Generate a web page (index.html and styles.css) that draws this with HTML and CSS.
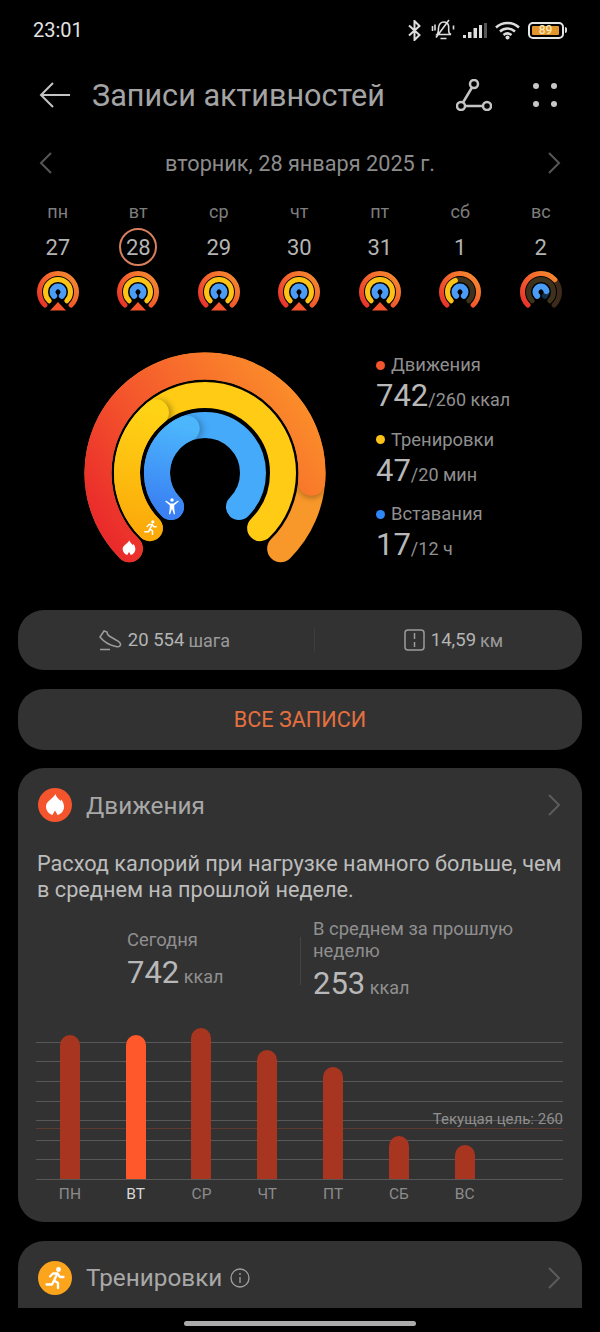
FILE: index.html
```html
<!DOCTYPE html>
<html lang="ru">
<head>
  <meta charset="UTF-8">
  <meta name="viewport" content="width=device-width, initial-scale=1.0">
  <title>Записи активностей</title>
  <link rel="stylesheet" href="styles.css">
</head>
<body>
  <svg class="sprite" aria-hidden="true">
    <symbol id="flame" viewBox="0 0 24 24">
      <path fill="#fff" d="M12.500 1c.5 3 3 4.500 5 7 .5-.7.8-1.500.8-1.500 1.500 2 2.700 4.500 2.700 7 0 4-2.500 7.500-6.500 8.500-.8-1.500-1.500-3-2.500-4.500-1 1.500-1.700 3-2.500 4.500C6 21 3 17.500 3 13.500 3 8 10.500 5.500 12.500 1z"/>
    </symbol>
    <symbol id="runner" viewBox="0 0 24 24">
      <circle cx="15.500" cy="3.500" r="2.400" fill="#fff"/>
      <path fill="none" stroke="#fff" stroke-width="2.300" stroke-linecap="round" stroke-linejoin="round" d="M7 10.500 10 7.500h4.500L11 14.500l4 2.500v5M14.500 7.500l2.500 3.500h3.500M11 14.500 9 18.500H3.500"/>
    </symbol>
    <symbol id="person" viewBox="0 0 24 24">
      <circle cx="12" cy="4" r="2.300" fill="#fff"/>
      <path fill="#fff" d="M3 6 4 4.800 9.800 8.500h4.400L20 4.800 21 6l-6 5v4l1 8h-1.500L12 15.500 9.500 23H8l1-8v-4z"/>
    </symbol>
    <symbol id="minibase" viewBox="0 0 42 42">
      <path class="mini-outer" d="M7.900 34.100A18.500 18.500 0 1 1 34.100 34.100"/>
    </symbol>
    <linearGradient id="outerGrad" gradientUnits="userSpaceOnUse" x1="20" y1="210" x2="225" y2="60">
      <stop offset="0" stop-color="#e8232b"/>
      <stop offset=".45" stop-color="#f4552c"/>
      <stop offset="1" stop-color="#fb8c2a"/>
    </linearGradient>
    <linearGradient id="midGrad" gradientUnits="userSpaceOnUse" x1="60" y1="180" x2="80" y2="60">
      <stop offset="0" stop-color="#fbaa0a"/>
      <stop offset="1" stop-color="#ffd315"/>
    </linearGradient>
    <linearGradient id="innerGrad" gradientUnits="userSpaceOnUse" x1="85" y1="160" x2="105" y2="75">
      <stop offset="0" stop-color="#3a80f3"/>
      <stop offset="1" stop-color="#4cb6fc"/>
    </linearGradient>
    <linearGradient id="miniGrad" x1="0" y1="1" x2="1" y2="0">
      <stop offset="0" stop-color="#e8302a"/>
      <stop offset=".5" stop-color="#f4602c"/>
      <stop offset="1" stop-color="#f59030"/>
    </linearGradient>
  </svg>

  <div class="screen">
    <div class="status">
      <span class="time">23:01</span>
      <div class="status-icons">
        <svg class="st-bt" width="13" height="21" viewBox="0 0 13 21"><path d="M1 5.500 11.500 15 6.500 20V1l5 5L1 15.500"/></svg>
        <svg class="st-bell" width="24" height="22" viewBox="0 0 24 22"><path d="M6 15.500c1.500-1.500 1.500-3.500 1.500-6.500 0-3.500 2.500-6 5-6s4.500 1.500 5 3.500c.5 2-.2 5 .5 7 .3 1 1 1.500 2 2zM7 15.500h12M9.500 19.500h6M18 1 5 18.500M1.500 7v5M4 5.500v6M22.500 6.500v4"/></svg>
        <svg width="24" height="15" viewBox="0 0 24 15"><rect x="0" y="12" width="3" height="3" fill="#ddd"/><rect x="5" y="9" width="3.500" height="6" fill="#ddd"/><rect x="10.500" y="5" width="3.500" height="10" fill="#ddd"/><rect x="16" y="2" width="3" height="13" fill="#ddd"/><rect x="21" y="0" width="3" height="15" fill="#555"/></svg>
        <svg class="st-wifi" width="25" height="19" viewBox="0 0 25 19"><path d="M1 6.500C7.500.5 17.500.5 24 6.500"/><path d="M5 10.500c4.500-4 10.500-4 15 0"/><path d="M8.500 14c2.500-2 5.500-2 8 0"/><circle cx="12.500" cy="16.500" r="2" fill="#ddd" stroke="none"/></svg>
        <div class="battery">
          <div class="battery-body"><span class="battery-fill">89</span></div>
          <span class="battery-tip"></span>
        </div>
      </div>
    </div>

    <div class="appbar">
      <svg class="back" width="32" height="28" viewBox="0 0 32 28"><path d="M31 14H2M14 2 2 14l12 12"/></svg>
      <h1 class="title">Записи активностей</h1>
      <svg class="route" width="36" height="32" viewBox="0 0 36 32"><circle cx="18" cy="5" r="4"/><circle cx="5" cy="27" r="4"/><circle cx="31" cy="27" r="4"/><path d="M16 8.500 7 23.500M9 27h18"/></svg>
      <div class="dots"><i></i><i></i><i></i><i></i></div>
    </div>

    <div class="dateline">
      <svg class="chev" width="13" height="22" viewBox="0 0 13 22"><path d="M12 1 2 11l10 10"/></svg>
      <span>вторник, 28 января 2025 г.</span>
      <svg class="chev" width="13" height="22" viewBox="0 0 13 22"><path d="M1 1l10 10L1 21"/></svg>
    </div>

    <div class="week">
      <div class="day"><span class="dow">пн</span><span class="num">27</span>
        <svg class="mini" viewBox="0 0 42 42"><use href="#minibase"/><path class="mini-mid" d="M12.200 29.800A12.500 12.500 0 1 1 29.800 29.800"/><path class="mini-in" d="M17.100 24.900A5.500 5.500 0 1 1 24.900 24.900"/><path class="mini-tri" d="M21 31 29 39.500H13z"/></svg>
      </div>
      <div class="day"><span class="dow">вт</span><span class="num today">28</span>
        <svg class="mini" viewBox="0 0 42 42"><use href="#minibase"/><path class="mini-mid" d="M12.200 29.800A12.500 12.500 0 1 1 29.800 29.800"/><path class="mini-in" d="M17.100 24.900A5.500 5.500 0 1 1 24.900 24.900"/><path class="mini-tri" d="M21 31 29 39.500H13z"/></svg>
      </div>
      <div class="day"><span class="dow">ср</span><span class="num">29</span>
        <svg class="mini" viewBox="0 0 42 42"><use href="#minibase"/><path class="mini-mid" d="M12.200 29.800A12.500 12.500 0 1 1 29.800 29.800"/><path class="mini-in" d="M17.100 24.900A5.500 5.500 0 1 1 24.900 24.900"/><path class="mini-tri" d="M21 31 29 39.500H13z"/></svg>
      </div>
      <div class="day"><span class="dow">чт</span><span class="num">30</span>
        <svg class="mini" viewBox="0 0 42 42"><use href="#minibase"/><path class="mini-mid" d="M12.200 29.800A12.500 12.500 0 1 1 29.800 29.800"/><path class="mini-in" d="M17.100 24.900A5.500 5.500 0 1 1 24.900 24.900"/><path class="mini-tri" d="M21 31 29 39.500H13z"/></svg>
      </div>
      <div class="day"><span class="dow">пт</span><span class="num">31</span>
        <svg class="mini" viewBox="0 0 42 42"><use href="#minibase"/><path class="mini-mid" d="M12.200 29.800A12.500 12.500 0 1 1 29.800 29.800"/><path class="mini-in" d="M17.100 24.900A5.500 5.500 0 1 1 24.900 24.900"/><path class="mini-tri" d="M21 31 29 39.500H13z"/></svg>
      </div>
      <div class="day"><span class="dow">сб</span><span class="num">1</span>
        <svg class="mini" viewBox="0 0 42 42"><use href="#minibase"/><path class="mini-mid dim" d="M12.200 29.800A12.500 12.500 0 1 1 29.800 29.800"/><path class="mini-mid" pathLength="100" stroke-dasharray="42 100" d="M12.200 29.800A12.500 12.500 0 1 1 29.800 29.800"/><path class="mini-in" d="M17.100 24.900A5.500 5.500 0 1 1 24.900 24.900"/></svg>
      </div>
      <div class="day"><span class="dow">вс</span><span class="num">2</span>
        <svg class="mini" viewBox="0 0 42 42"><path class="mini-outer dim" d="M7.900 34.100A18.500 18.500 0 1 1 34.100 34.100"/><path class="mini-outer" pathLength="100" stroke-dasharray="68 100" d="M7.900 34.100A18.500 18.500 0 1 1 34.100 34.100"/><path class="mini-mid dim" d="M12.200 29.800A12.500 12.500 0 1 1 29.800 29.800"/><path class="mini-in dim-blue" d="M17.100 24.900A5.500 5.500 0 1 1 24.900 24.900"/><path class="mini-in" pathLength="100" stroke-dasharray="80 100" d="M17.100 24.900A5.500 5.500 0 1 1 24.900 24.900"/></svg>
      </div>
    </div>

    <div class="summary">
      <svg class="rings" width="242" height="216" viewBox="0 0 242 216">
        <path class="ring r-outer" stroke="#f9982a" d="M45.340 196.660A107 107 0 1 1 196.660 196.660"/>
        <path class="ring r-outer lap lap-outer" stroke="url(#outerGrad)" d="M45.340 196.660A107 107 0 1 1 227.600 130.300"/>
        <path class="ring r-mid" stroke="#ffcb14" d="M65.850 176.150A78 78 0 1 1 176.150 176.150"/>
        <path class="ring r-mid lap lap-mid" stroke="url(#midGrad)" d="M65.850 176.150A78 78 0 0 1 72 60.300"/>
        <path class="ring r-in" stroke="#45aafa" d="M87.060 154.940A48 48 0 1 1 154.940 154.940"/>
        <path class="ring r-in lap lap-in" stroke="url(#innerGrad)" d="M87.060 154.940A48 48 0 0 1 102.700 76.600"/>
        <use href="#flame" x="36.500" y="187.500" width="17" height="17"/>
        <use href="#runner" x="58.500" y="167.500" width="16" height="16"/>
        <use href="#person" x="79" y="145" width="18" height="18"/>
      </svg>
      <div class="stats">
        <div class="stat">
          <div class="stat-label"><i class="dot red"></i>Движения</div>
          <div class="stat-value"><b>742</b>/260 ккал</div>
        </div>
        <div class="stat">
          <div class="stat-label"><i class="dot yellow"></i>Тренировки</div>
          <div class="stat-value"><b>47</b>/20 мин</div>
        </div>
        <div class="stat">
          <div class="stat-label"><i class="dot blue"></i>Вставания</div>
          <div class="stat-value"><b>17</b>/12 ч</div>
        </div>
      </div>
    </div>

    <div class="pill totals">
      <div class="total steps">
        <svg class="line-icon" width="23" height="22" viewBox="0 0 23 22"><path d="M1 8 5 2l3 1c0 2 1 3.500 3 4.500l6 3.500c3 1.500 5 3 4.500 5-.5 1.500-2.500 2-4.500 1.500C12 16.500 5 13 1 8zM1 20.500h10"/></svg>
        <span class="big">20 554</span><span>шага</span>
      </div>
      <div class="total dist">
        <svg class="line-icon" width="21" height="22" viewBox="0 0 21 22"><rect x="1" y="1" width="19" height="20" rx="3"/><path d="M10.500 4v6M10.500 13v5"/></svg>
        <span class="big">14,59</span><span>км</span>
      </div>
    </div>

    <div class="pill all-records">ВСЕ ЗАПИСИ</div>

    <div class="card">
      <div class="card-head">
        <span class="badge badge-red"><svg width="24" height="24"><use href="#flame"/></svg></span>
        <h2>Движения</h2>
        <svg class="chev card-chev" width="13" height="22" viewBox="0 0 13 22"><path d="M1 1l10 10L1 21"/></svg>
      </div>
      <p class="desc">Расход калорий при нагрузке намного больше, чем в среднем на прошлой неделе.</p>
      <div class="compare">
        <div class="cmp cmp-today">
          <div class="cmp-label">Сегодня</div>
          <div class="cmp-value"><b>742</b> ккал</div>
        </div>
        <div class="cmp-line"></div>
        <div class="cmp">
          <div class="cmp-label">В среднем за прошлую неделю</div>
          <div class="cmp-value"><b>253</b> ккал</div>
        </div>
      </div>
      <div class="chart">
        <div class="plot">
          <div class="goal-line"></div>
          <div class="goal-label">Текущая цель: 260</div>
          <div class="col"><div class="bar" style="height:144px"></div></div>
          <div class="col"><div class="bar active" style="height:144px"></div></div>
          <div class="col"><div class="bar" style="height:151px"></div></div>
          <div class="col"><div class="bar" style="height:129px"></div></div>
          <div class="col"><div class="bar" style="height:112px"></div></div>
          <div class="col"><div class="bar" style="height:43px"></div></div>
          <div class="col"><div class="bar" style="height:34px"></div></div>
        </div>
        <div class="axis">
          <span>ПН</span><span class="active">ВТ</span><span>СР</span><span>ЧТ</span><span>ПТ</span><span>СБ</span><span>ВС</span>
        </div>
      </div>
    </div>

    <div class="card card-cut">
      <div class="card-head">
        <span class="badge badge-yellow"><svg width="24" height="24"><use href="#runner"/></svg></span>
        <h2>Тренировки</h2>
        <svg class="info" width="20" height="20" viewBox="0 0 20 20"><circle cx="10" cy="10" r="9"/><path d="M10 9v6M10 5v2"/></svg>
        <svg class="chev card-chev" width="13" height="22" viewBox="0 0 13 22"><path d="M1 1l10 10L1 21"/></svg>
      </div>
    </div>

    <div class="home"><span></span></div>
  </div>
</body>
</html>
```

FILE: styles.css
```css
* {
  box-sizing: border-box;
}
body {
  margin: 0;
  padding: 0;
  background-color: #000;
  color: #a8a8a8;
  font-family: Roboto, "Liberation Sans", sans-serif;
}
.sprite {
  display: block;
  width: 0;
  height: 0;
}
.screen {
  width: 600px;
  height: 1332px;
  overflow: hidden;
  background: #000;
}

/* status bar */
.status {
  height: 60px;
  padding: 0 33px;
  display: flex;
  align-items: center;
  justify-content: space-between;
}
.time {
  font-size: 20px;
  color: #e2e2e2;
}
.status-icons {
  display: flex;
  align-items: center;
  gap: 8px;
}
.status-icons svg {
  fill: none;
  stroke: #ddd;
  stroke-width: 2;
}
.status-icons svg rect {
  stroke: none;
}
.st-bt {
  margin-right: 2px;
}
.status-icons .st-bell {
  stroke-width: 1.600;
}
.status-icons .st-wifi {
  stroke-width: 2.500;
}
.battery {
  display: flex;
  align-items: center;
  gap: 1px;
}
.battery-body {
  width: 36px;
  height: 17px;
  border: 2px solid #e6e6e6;
  border-radius: 5px;
  padding: 2px;
  display: flex;
}
.battery-fill {
  width: 27px;
  background: #e3952b;
  border-radius: 1px;
  color: #f7e5b5;
  font-size: 12px;
  font-weight: 500;
  line-height: 9px;
  text-align: center;
}
.battery-tip {
  width: 2px;
  height: 6px;
  background: #ddd;
  border-radius: 0 2px 2px 0;
}

/* app bar */
.appbar {
  height: 70px;
  padding-left: 39px;
  display: flex;
  align-items: center;
}
.back, .route {
  fill: none;
  stroke: #c4c4c4;
  stroke-width: 2.500;
}
.back {
  stroke-width: 2;
}
.title {
  margin: 0 0 0 21px;
  flex: 1;
  font-size: 30.600px;
  font-weight: 400;
  color: #a4a4a4;
}
.route {
  margin-right: 41px;
}
.dots {
  width: 24px;
  margin-right: 43px;
  display: grid;
  grid-template-columns: 6px 6px;
  justify-content: space-between;
  row-gap: 12px;
}
.dots i {
  width: 6px;
  height: 6px;
  border-radius: 50%;
  background: #c8c8c8;
}

/* date + week */
.dateline {
  height: 66px;
  padding: 0 39px;
  display: flex;
  align-items: center;
  justify-content: space-between;
  font-size: 21.700px;
  color: #8c8c8c;
}
.chev {
  fill: none;
  stroke: #565656;
  stroke-width: 2;
}
.week {
  padding-left: 17.500px;
  display: grid;
  grid-template-columns: repeat(7, 80.500px);
}
.day {
  display: flex;
  flex-direction: column;
  align-items: center;
}
.dow {
  height: 32px;
  line-height: 32px;
  font-size: 18px;
  color: #7e7e7e;
}
.num {
  width: 38px;
  height: 38px;
  border-radius: 50%;
  line-height: 40px;
  text-align: center;
  font-size: 22px;
  color: #b4b4b4;
}
.num.today {
  border: 2px solid #d97f5e;
  line-height: 36px;
}
.mini {
  width: 42px;
  height: 42px;
  margin-top: 5px;
  fill: none;
}
.mini-outer, .mini-mid, .mini-in {
  fill: none;
  stroke-linecap: round;
}
.mini-outer {
  stroke: url(#miniGrad);
  stroke-width: 5;
}
.mini-mid {
  stroke: #fcc215;
  stroke-width: 5;
}
.mini-in {
  stroke: #4a9cf6;
  stroke-width: 6;
}
.mini-outer.dim {
  stroke: #3d2a1a;
}
.mini-mid.dim {
  stroke: #3e321c;
}
.mini-in.dim-blue {
  stroke: #12304a;
}
.mini-tri {
  fill: #f4552c;
}

/* big rings and numbers */
.summary {
  height: 297px;
  padding: 39px 0 0 84px;
  display: flex;
  align-items: flex-start;
}
.rings {
  flex: none;
}
.ring {
  fill: none;
  stroke-linecap: round;
}
.r-outer {
  stroke-width: 27;
}
.r-mid, .r-in {
  stroke-width: 26;
}
.lap-outer {
  filter: drop-shadow(0 2px 3px rgba(0, 0, 0, .3));
}
.lap-mid {
  filter: drop-shadow(3px 1px 3px rgba(0, 0, 0, .3));
}
.lap-in {
  filter: drop-shadow(3px 1px 3px rgba(0, 0, 0, .25));
}
.stats {
  margin-left: 50px;
}
.stat {
  height: 74.500px;
}
.stat-label {
  height: 26px;
  line-height: 26px;
  font-size: 18.400px;
  color: #8f8f8f;
  display: flex;
  align-items: center;
  gap: 6px;
}
.dot {
  width: 9px;
  height: 9px;
  border-radius: 50%;
}
.dot.red {
  background: #f4552c;
}
.dot.yellow {
  background: #fcc215;
}
.dot.blue {
  background: #2f86f6;
}
.stat-value {
  height: 36px;
  line-height: 36px;
  font-size: 18px;
  color: #8f8f8f;
}
.stat-value b {
  font-size: 31px;
  font-weight: 400;
  color: #b8b8b8;
}

/* pills */
.pill {
  height: 60px;
  margin: 0 18px 19px;
  background: #323232;
  border-radius: 26px;
}
.totals {
  display: flex;
  align-items: center;
}
.total {
  display: flex;
  align-items: center;
  justify-content: center;
  gap: 4px;
  height: 24px;
  font-size: 18px;
  color: #9a9a9a;
}
.steps {
  width: 297px;
  padding-right: 3px;
  border-right: 1px solid #3e3e3e;
}
.dist {
  flex: 1;
  padding-left: 10px;
}
.total .big {
  font-size: 18.500px;
  color: #b4b4b4;
}
.line-icon {
  fill: none;
  stroke: #9c9c9c;
  stroke-width: 1.500;
  margin-right: 2px;
}
.all-records {
  height: 61px;
  margin-bottom: 18px;
  line-height: 61px;
  text-align: center;
  font-size: 21.600px;
  color: #e5703f;
}

/* cards */
.card {
  margin: 0 18px 19px;
  height: 454px;
  background: #323232;
  border-radius: 26px;
}
.card-cut {
  height: 67px;
  margin-bottom: 0;
  border-radius: 26px 26px 0 0;
}
.card-head {
  height: 74px;
  padding: 0 21px 0 20px;
  display: flex;
  align-items: center;
}
.card-cut .card-head {
  height: 73px;
}
.card-head h2 {
  margin: 0 0 0 14px;
  font-size: 24.300px;
  font-weight: 400;
  color: #a8a8a8;
}
.card-chev {
  margin-left: auto;
  stroke: #5c5c5c;
}
.badge {
  width: 34px;
  height: 34px;
  border-radius: 50%;
  display: flex;
  align-items: center;
  justify-content: center;
}
.badge-red {
  background: #f4552c;
}
.badge-yellow {
  background: #fca51c;
}
.info {
  margin-left: 8px;
  fill: none;
  stroke: #a0a0a0;
  stroke-width: 1.300;
}
.desc {
  margin: 9px 18px 0 19px;
  font-size: 21.700px;
  line-height: 26px;
  color: #bcbcbc;
}
.compare {
  height: 84px;
  margin-top: 15px;
  padding-left: 109px;
  display: flex;
  align-items: flex-start;
}
.cmp {
  width: 205px;
}
.cmp-today {
  width: 173px;
  padding-top: 11px;
}
.cmp-line {
  width: 1px;
  height: 48px;
  margin: 19px 12px 0 0;
  background: #444;
}
.cmp-label {
  font-size: 18.400px;
  line-height: 22px;
  color: #8f8f8f;
}
.cmp-value {
  margin-top: 4px;
  height: 36px;
  line-height: 36px;
  font-size: 18px;
  color: #8f8f8f;
}
.cmp-value b {
  font-size: 31px;
  font-weight: 400;
  color: #b8b8b8;
}

/* bar chart */
.chart {
  margin: 26px 19px 0 18px;
}
.plot {
  position: relative;
  height: 152px;
  padding-left: 1px;
  display: grid;
  grid-template-columns: repeat(7, 65.800px);
  align-items: end;
  justify-items: center;
  background: repeating-linear-gradient(to top, #585858 0, #585858 1px, transparent 1px, transparent 19.600px) bottom / 100% 139px no-repeat;
}
.col {
  position: relative;
}
.bar {
  width: 20px;
  margin-bottom: 1px;
  border-radius: 10px 10px 0 0;
  background: #a8351f;
}
.bar.active {
  background: #ff582b;
}
.goal-line {
  position: absolute;
  left: 0;
  right: 0;
  bottom: 51px;
  height: 1px;
  background: #5e3a30;
}
.goal-label {
  position: absolute;
  right: 0;
  bottom: 52px;
  font-size: 15px;
  line-height: 18px;
  color: #8f8f8f;
}
.axis {
  padding-left: 1px;
  display: grid;
  grid-template-columns: repeat(7, 65.800px);
  justify-items: center;
  height: 30px;
  line-height: 29px;
  font-size: 15.500px;
  color: #8c8c8c;
}
.axis .active {
  color: #d8d8d8;
}

/* gesture bar */
.home {
  height: 24px;
  display: flex;
  align-items: center;
  justify-content: center;
}
.home span {
  width: 232px;
  height: 5px;
  margin-top: 6px;
  border-radius: 3px;
  background: #ababab;
}
```
